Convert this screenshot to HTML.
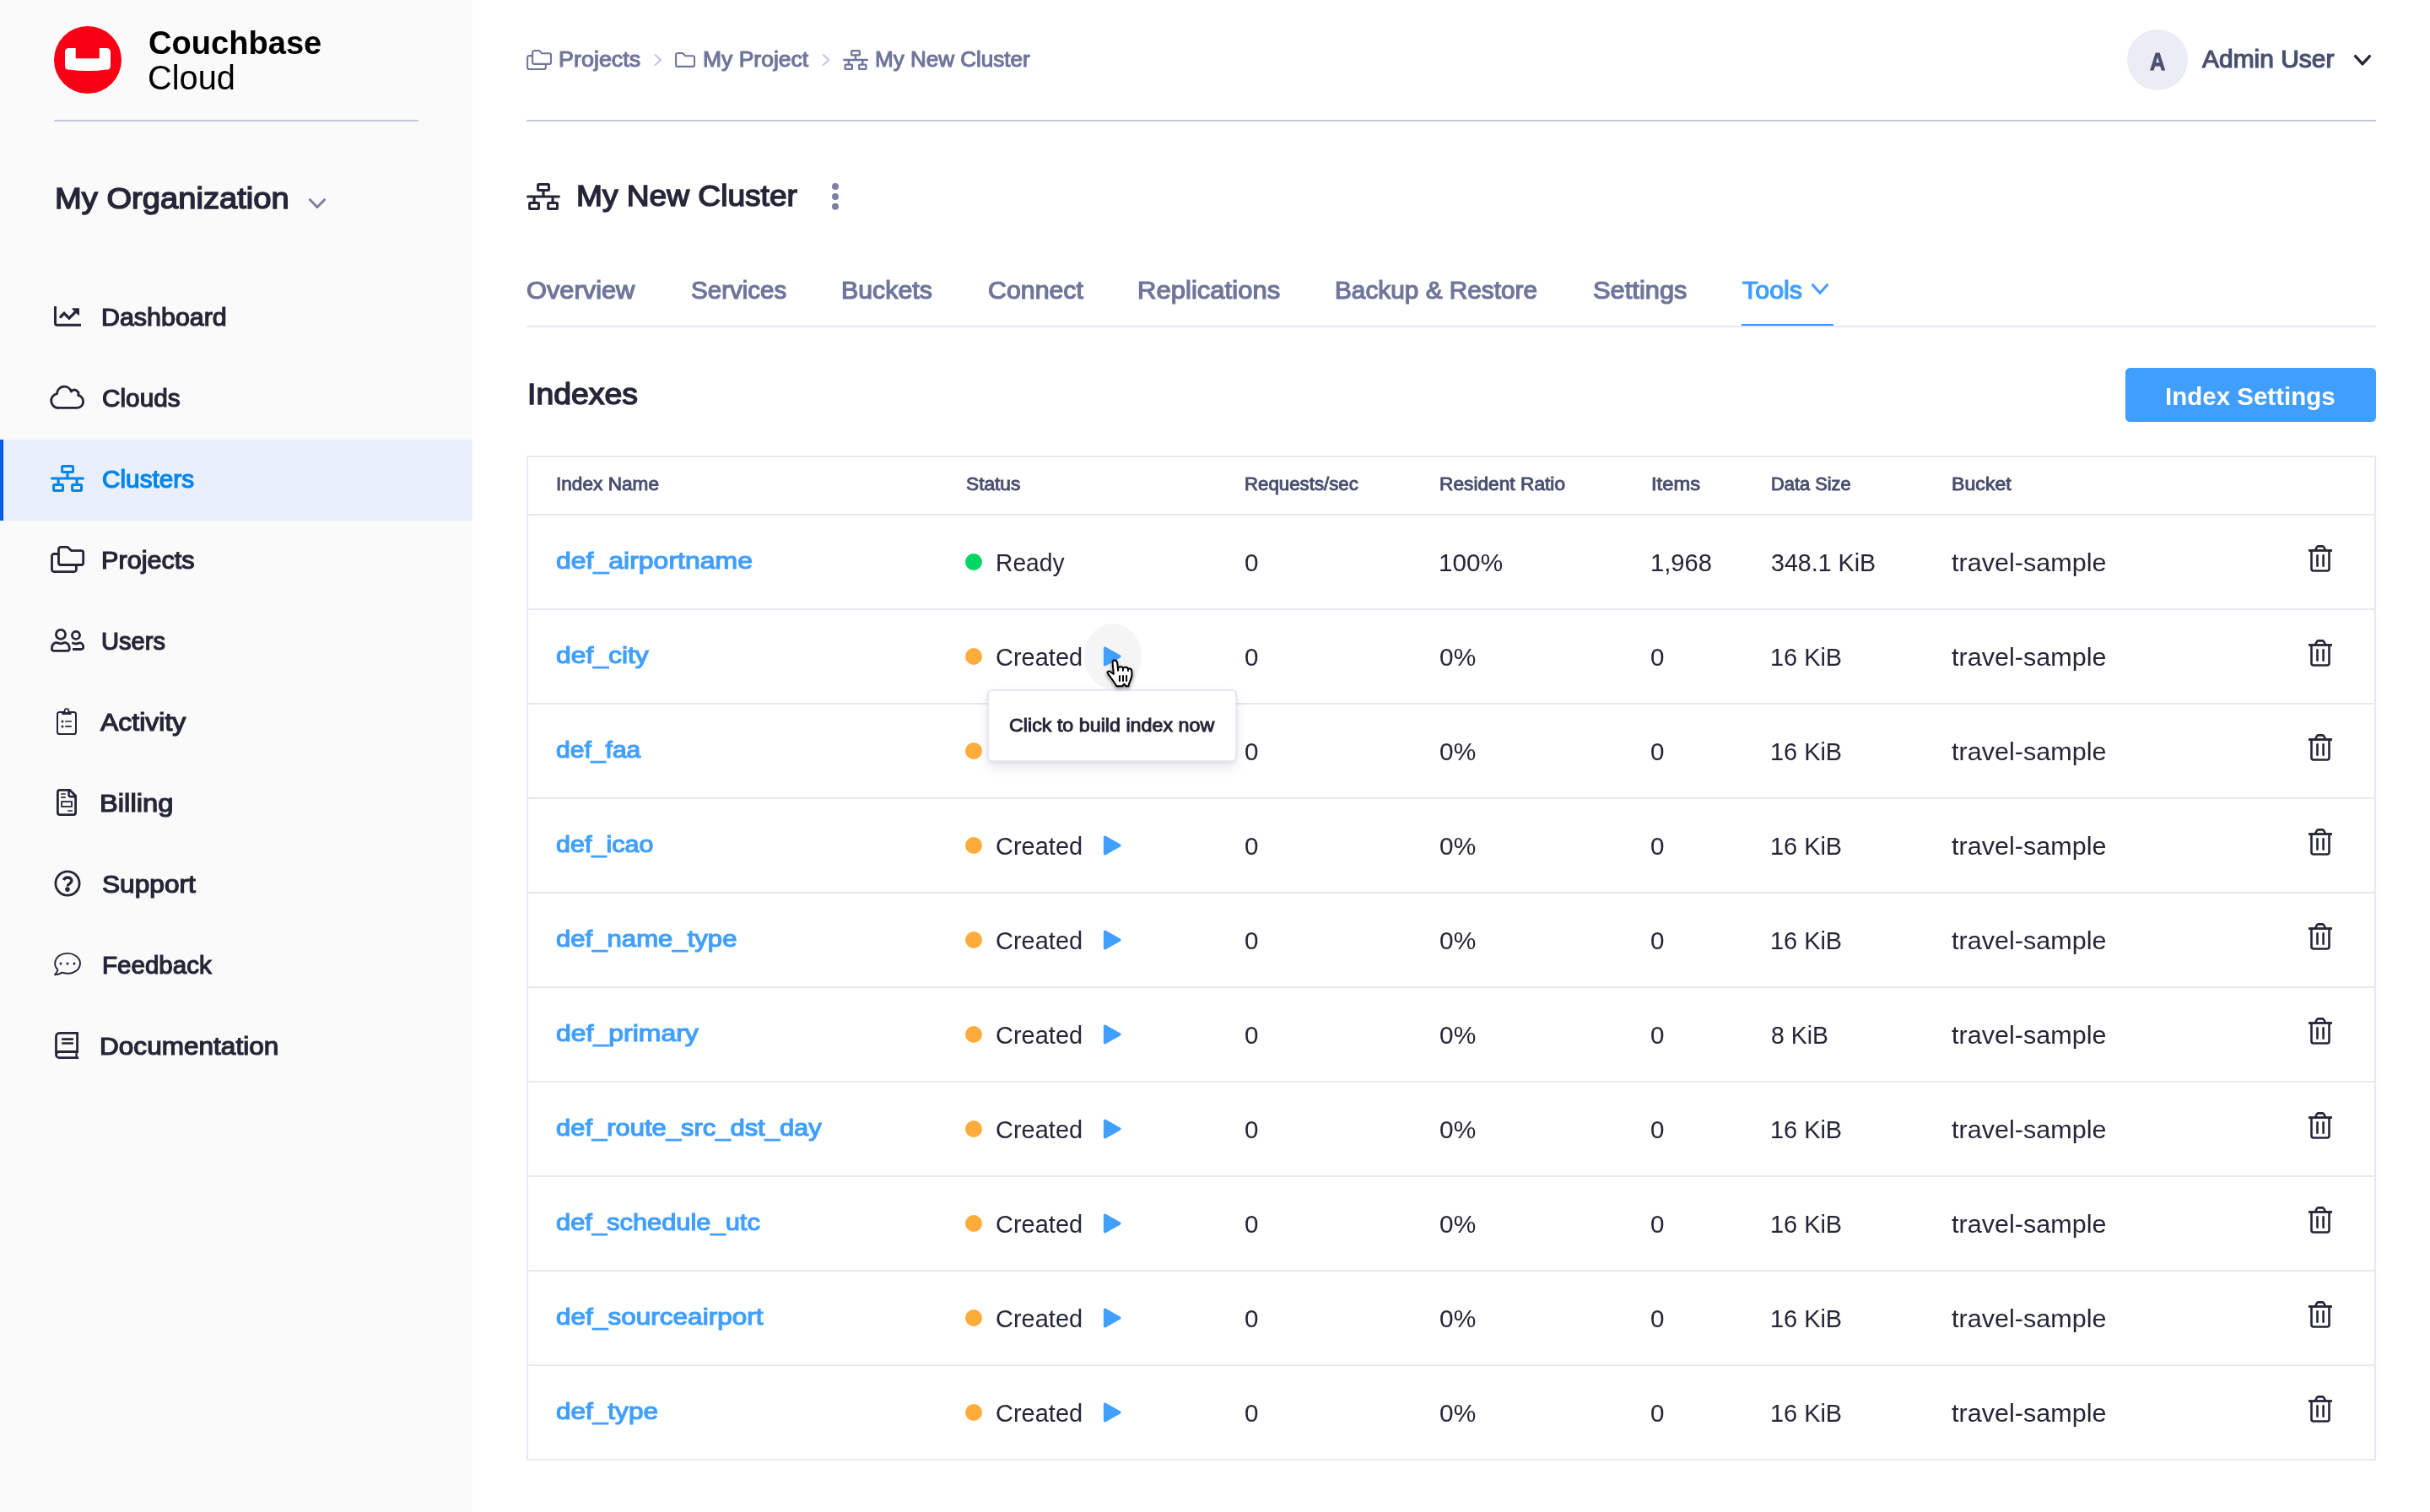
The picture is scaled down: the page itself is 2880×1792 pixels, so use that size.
<!DOCTYPE html>
<html lang="en">
<head>
<meta charset="utf-8">
<title>Couchbase Cloud - My New Cluster - Indexes</title>
<style>
*{box-sizing:border-box}
html,body{margin:0;padding:0}
html{overflow:hidden}
body{width:2880px;height:1792px;overflow:hidden;background:#fff;position:relative;
 font-family:"Liberation Sans",sans-serif;color:#252738}
.t{position:absolute;white-space:nowrap;line-height:1;transform-origin:0 0;display:block}
.b{position:absolute;display:block}
svg{position:absolute;overflow:visible}
#side{left:0;top:0;width:560px;height:1792px;background:#fafafa}
#active{left:0;top:521px;width:560px;height:96px;background:linear-gradient(90deg,#0069e8 0,#004be5 4px,#e9effc 4px)}
.hl{height:2px;background:#c3c7e1}
.rl{left:626px;width:2188px;height:2px;background:#e7e8f2}
#tbl{left:624px;top:540px;width:2192px;height:1191px;border:2px solid #e7e8f2}
#btn{left:2519.2px;top:435.8px;width:296.7px;height:64.2px;background:#409eff;border-radius:5.5px}
#ava{left:2520.8px;top:34.9px;width:72.2px;height:72.2px;border-radius:50%;background:#ebecf4}
#hov{left:1285px;top:739px;width:68px;height:78px;border-radius:50%;background:#f5f5f5}
#tip{left:1169.6px;top:816.8px;width:296.9px;height:86px;background:#fff;border:2px solid #e7e8f2;border-radius:6px;
 box-shadow:0 1px 3px rgba(40,44,90,.10),0 7px 14px rgba(40,44,90,.10)}
.dot{width:20px;height:20px;border-radius:50%;left:1144px}
</style>
</head>
<body>
<div class="b" id="side"></div>
<div class="b" id="active"></div>
<div class="b hl" style="left:64px;top:142px;width:432px"></div>
<div class="b hl" style="left:624px;top:142px;width:2192px"></div>
<div class="b" style="left:624px;top:386px;width:2192px;height:2px;background:#e7e8f2"></div>
<div class="b" style="left:2064px;top:384px;width:109px;height:2px;background:#3398ff"></div>
<div class="b" id="btn"></div>
<div class="b" id="ava"></div>
<div class="b" id="tbl"></div>
<div class="b rl" style="top:609px"></div>
<div class="b dot" style="top:656px;background:#00d664"></div>
<div class="b rl" style="top:721px"></div>
<div class="b dot" style="top:768px;background:#ffac3a"></div>
<div class="b rl" style="top:833px"></div>
<div class="b dot" style="top:880px;background:#ffac3a"></div>
<div class="b rl" style="top:945px"></div>
<div class="b dot" style="top:992px;background:#ffac3a"></div>
<div class="b rl" style="top:1057px"></div>
<div class="b dot" style="top:1104px;background:#ffac3a"></div>
<div class="b rl" style="top:1169px"></div>
<div class="b dot" style="top:1216px;background:#ffac3a"></div>
<div class="b rl" style="top:1281px"></div>
<div class="b dot" style="top:1328px;background:#ffac3a"></div>
<div class="b rl" style="top:1393px"></div>
<div class="b dot" style="top:1440px;background:#ffac3a"></div>
<div class="b rl" style="top:1505px"></div>
<div class="b dot" style="top:1552px;background:#ffac3a"></div>
<div class="b rl" style="top:1617px"></div>
<div class="b dot" style="top:1664px;background:#ffac3a"></div>
<div class="b" id="hov"></div>
<svg width="2880" height="1792" viewBox="0 0 2880 1792" style="left:0;top:0"><circle cx="104" cy="71" r="40" fill="#fa0014"/>
<path d="M81 57H89.7V69.2H117.8V57H126.5A4.5 4.5 0 0 1 131 61.5V78.2A4.5 4.5 0 0 1 126.8 82.6Q104 85.6 81.2 82.6A4.5 4.5 0 0 1 77 78.2V61.5A4.5 4.5 0 0 1 81 57Z" fill="#fff"/>
<path d="M367.4 236.7L376 245.5L384.6 236.7" fill="none" stroke="#7e809e" stroke-width="3" stroke-linecap="round" stroke-linejoin="round"/>
<g transform="translate(0 0)" fill="none" stroke="#252738" color="#252738" stroke-linecap="round" stroke-linejoin="round"><path d="M65.5 363.1V383.5A1.8 1.8 0 0 0 67.3 385.3H96" stroke-width="3" stroke-linecap="butt"/><path d="M71.9 375.5L76 371.3L82 377.2L89.5 369.7" stroke-width="3.3" stroke-linecap="round" stroke-linejoin="miter"/><path d="M86.1 365.9H93.3V373.1Z" fill="currentColor" stroke-width="1.4"/></g>
<g transform="translate(0 0)" fill="none" stroke="#252738" color="#252738" stroke-linecap="round" stroke-linejoin="round"><path d="M69.9 483.4A8.5 8.5 0 0 1 67.5 466.6A8.7 8.7 0 0 1 84.4 464A4.8 4.8 0 0 1 92.7 468.5A7.55 7.55 0 0 1 91.6 483.4Z" stroke-width="2.9"/></g>
<g transform="translate(60 551)" fill="none" stroke="#0086eb" color="#0086eb" stroke-linecap="round" stroke-linejoin="round"><rect x="13.6" y="1.5" width="12.9" height="7" rx="1" stroke-width="3"/><rect x="3.6" y="23.5" width="10.9" height="7" rx="1" stroke-width="3"/><rect x="25.6" y="23.5" width="10.9" height="7" rx="1" stroke-width="3"/><path d="M20 10V16M1.6 16H38.4M9.1 16V22M31.1 16V22" stroke-width="3.2"/></g>
<g transform="translate(60 647)" fill="none" stroke="#252738" color="#252738" stroke-linecap="round" stroke-linejoin="round"><path d="M12 1.4H20.2L24.4 5.6H36.2A2.5 2.5 0 0 1 38.7 8.1V20A2.5 2.5 0 0 1 36.2 22.5H12A2.5 2.5 0 0 1 9.5 20V3.9A2.5 2.5 0 0 1 12 1.4Z" stroke-width="2.8"/><path d="M8 9.5H4A2.5 2.5 0 0 0 1.5 12V28.1A2.5 2.5 0 0 0 4 30.6H27.9A2.5 2.5 0 0 0 30.4 28.1V24" stroke-width="2.8" stroke-linecap="butt"/></g>
<g transform="translate(0 0)" fill="none" stroke="#252738" color="#252738" stroke-linecap="round" stroke-linejoin="round"><circle cx="72" cy="751.9" r="5.55" stroke-width="2.8"/><path d="M63.9 771.4H79.8A2.5 2.5 0 0 0 82.3 768.9V768.2C82.3 764.4 79.7 761.7 76.8 761.7C75.2 761.7 74.4 762.8 71.9 762.8C69.3 762.8 68.5 761.7 66.9 761.7C64 761.7 61.4 764.4 61.4 768.2V768.9A2.5 2.5 0 0 0 63.9 771.4Z" stroke-width="2.8"/><circle cx="90" cy="752.9" r="4.55" stroke-width="2.8"/><path d="M85.3 761.7C86.7 762.3 87.7 763 90 763C92.4 763 93.2 761.9 94.6 761.9C97 761.9 98.7 764.3 98.7 767V767.2A2.3 2.3 0 0 1 96.4 769.5H86.1" stroke-width="2.8" stroke-linecap="butt"/></g>
<g transform="translate(0 0)" fill="none" stroke="#252738" color="#252738" stroke-linecap="round" stroke-linejoin="round"><rect x="68" y="843.9" width="22" height="26.1" rx="2.6" stroke-width="2"/><path d="M73.2 844.2H84.7V846.2A0.7 0.7 0 0 1 84 846.9H73.9A0.7 0.7 0 0 1 73.2 846.2Z" fill="currentColor" stroke="none"/><circle cx="78.95" cy="842.5" r="2.5" fill="#fafafa" stroke-width="1.7"/><circle cx="74" cy="855" r="1.5" fill="currentColor" stroke="none"/><circle cx="74" cy="860.95" r="1.5" fill="currentColor" stroke="none"/><path d="M77.2 855H84.8M77.2 860.95H84.8" stroke-width="1.7" stroke-linecap="butt"/></g>
<g transform="translate(0 0)" fill="none" stroke="#252738" color="#252738" stroke-linecap="round" stroke-linejoin="round"><path d="M71 936.3H82.6L89.6 943.3V963A2.6 2.6 0 0 1 87 965.6H71A2.6 2.6 0 0 1 68.4 963V938.9A2.6 2.6 0 0 1 71 936.3Z" stroke-width="2.8"/><path d="M81.6 936.5V942.5A1.6 1.6 0 0 0 83.2 944.1H89.4" stroke-width="2.6"/><path d="M72.2 940.95H77.8M72.2 945.1H77.8M80.1 961.05H85.9" stroke-width="1.6" stroke-linecap="butt"/><rect x="73.1" y="950.1" width="11.9" height="5.8" stroke-width="1.8" stroke-linejoin="miter"/></g>
<g transform="translate(0 0)" fill="none" stroke="#252738" color="#252738" stroke-linecap="round" stroke-linejoin="round"><circle cx="80" cy="1047.05" r="14.1" stroke-width="2.8"/><path d="M75.4 1043C76.2 1041.1 77.8 1040 80.1 1040C82.9 1040 84.9 1041.6 84.9 1044C84.9 1047.2 80 1047.4 80 1050.6" stroke-width="3.4" stroke-linecap="butt"/><circle cx="80" cy="1054.1" r="2.8" fill="currentColor" stroke="none"/></g>
<g transform="translate(0 0)" fill="none" stroke="#252738" color="#252738" stroke-linecap="round" stroke-linejoin="round"><path d="M73.8 1152.6A14.9 11.9 0 1 0 68.4 1149.2Q67.6 1152.4 65 1155.4Q70 1155 73.8 1152.6Z" stroke-width="1.9"/><circle cx="72" cy="1141.9" r="1.5" fill="currentColor" stroke="none"/><circle cx="79.95" cy="1141.9" r="1.5" fill="currentColor" stroke="none"/><circle cx="88" cy="1141.9" r="1.5" fill="currentColor" stroke="none"/></g>
<g transform="translate(0 0)" fill="none" stroke="#252738" color="#252738" stroke-linecap="round" stroke-linejoin="round"><path d="M93 1253.6H70.1A3.6 3.6 0 0 1 66.5 1250V1228.3A4 4 0 0 1 70.5 1224.3H91.6V1246.5H70.1A3.55 3.55 0 0 0 66.5 1250" stroke-width="2.8" stroke-linecap="butt" stroke-linejoin="miter"/><path d="M90.6 1246.5V1253.6" stroke-width="2.3" stroke-linecap="butt"/><path d="M73.2 1231.55H86.9M73.2 1236.5H86.9" stroke-width="2.7" stroke-linecap="butt"/></g>
<g transform="translate(624 59) scale(0.75)" fill="none" stroke="#70769a" color="#70769a" stroke-linecap="round" stroke-linejoin="round"><path d="M12 1.4H20.2L24.4 5.6H36.2A2.5 2.5 0 0 1 38.7 8.1V20A2.5 2.5 0 0 1 36.2 22.5H12A2.5 2.5 0 0 1 9.5 20V3.9A2.5 2.5 0 0 1 12 1.4Z" stroke-width="2.8"/><path d="M8 9.5H4A2.5 2.5 0 0 0 1.5 12V28.1A2.5 2.5 0 0 0 4 30.6H27.9A2.5 2.5 0 0 0 30.4 28.1V24" stroke-width="2.8" stroke-linecap="butt"/></g>
<path d="M776.5 64.9L783.0999999999999 71L776.5 77.1" fill="none" stroke="#c0c4e4" stroke-width="2" stroke-linecap="round" stroke-linejoin="round"/>
<g transform="translate(800 62) scale(0.75)" fill="none" stroke="#70769a" color="#70769a" stroke-linecap="round" stroke-linejoin="round"><path transform="translate(-8 0)" d="M12 1.4H20.2L24.4 5.6H36.2A2.5 2.5 0 0 1 38.7 8.1V20A2.5 2.5 0 0 1 36.2 22.5H12A2.5 2.5 0 0 1 9.5 20V3.9A2.5 2.5 0 0 1 12 1.4Z" stroke-width="2.8"/></g>
<path d="M975.7 64.9L982.3 71L975.7 77.1" fill="none" stroke="#c0c4e4" stroke-width="2" stroke-linecap="round" stroke-linejoin="round"/>
<g transform="translate(999 59) scale(0.75)" fill="none" stroke="#70769a" color="#70769a" stroke-linecap="round" stroke-linejoin="round"><rect x="13.6" y="1.5" width="12.9" height="7" rx="1" stroke-width="3"/><rect x="3.6" y="23.5" width="10.9" height="7" rx="1" stroke-width="3"/><rect x="25.6" y="23.5" width="10.9" height="7" rx="1" stroke-width="3"/><path d="M20 10V16M1.6 16H38.4M9.1 16V22M31.1 16V22" stroke-width="3.2"/></g>
<path d="M2791.6 66.60000000000001L2800 75.8L2808.4 66.60000000000001" fill="none" stroke="#252738" stroke-width="3.3" stroke-linecap="round" stroke-linejoin="round"/>
<g transform="translate(624 217)" fill="none" stroke="#252738" color="#252738" stroke-linecap="round" stroke-linejoin="round"><rect x="13.6" y="1.5" width="12.9" height="7" rx="1" stroke-width="3"/><rect x="3.6" y="23.5" width="10.9" height="7" rx="1" stroke-width="3"/><rect x="25.6" y="23.5" width="10.9" height="7" rx="1" stroke-width="3"/><path d="M20 10V16M1.6 16H38.4M9.1 16V22M31.1 16V22" stroke-width="3.2"/></g>
<circle cx="990" cy="221.1" r="4" fill="#7d80a0"/>
<circle cx="990" cy="232.9" r="4" fill="#7d80a0"/>
<circle cx="990" cy="244.8" r="4" fill="#7d80a0"/>
<path d="M2148.5 337.75L2157 347.25L2165.5 337.75" fill="none" stroke="#409fff" stroke-width="3.2" stroke-linecap="round" stroke-linejoin="round"/>
<g transform="translate(2736 646)" fill="none" stroke="#252738" color="#252738" stroke-linecap="round" stroke-linejoin="round"><path d="M1.4 6.5H26.6" stroke-width="2.8" stroke-linecap="square"/><path d="M3.5 6.5V28A2.5 2.5 0 0 0 6 30.5H22A2.5 2.5 0 0 0 24.5 28V6.5" stroke-width="2.6"/><path d="M8 6L10 2.3Q10.5 1.4 11.5 1.4H16.6Q17.6 1.4 18.1 2.3L20.1 6" stroke-width="2.6"/><path d="M10.5 12.3V24.7M17.6 12.3V24.7" stroke-width="2.6"/></g>
<g transform="translate(2736 758)" fill="none" stroke="#252738" color="#252738" stroke-linecap="round" stroke-linejoin="round"><path d="M1.4 6.5H26.6" stroke-width="2.8" stroke-linecap="square"/><path d="M3.5 6.5V28A2.5 2.5 0 0 0 6 30.5H22A2.5 2.5 0 0 0 24.5 28V6.5" stroke-width="2.6"/><path d="M8 6L10 2.3Q10.5 1.4 11.5 1.4H16.6Q17.6 1.4 18.1 2.3L20.1 6" stroke-width="2.6"/><path d="M10.5 12.3V24.7M17.6 12.3V24.7" stroke-width="2.6"/></g>
<g transform="translate(1307.8 766)" fill="none" stroke="#409fff" color="#409fff" stroke-linecap="round" stroke-linejoin="round"><path d="M1.8 2.3L19.1 12L1.8 21.7Z" fill="currentColor" stroke-width="3.4"/></g>
<g transform="translate(2736 870)" fill="none" stroke="#252738" color="#252738" stroke-linecap="round" stroke-linejoin="round"><path d="M1.4 6.5H26.6" stroke-width="2.8" stroke-linecap="square"/><path d="M3.5 6.5V28A2.5 2.5 0 0 0 6 30.5H22A2.5 2.5 0 0 0 24.5 28V6.5" stroke-width="2.6"/><path d="M8 6L10 2.3Q10.5 1.4 11.5 1.4H16.6Q17.6 1.4 18.1 2.3L20.1 6" stroke-width="2.6"/><path d="M10.5 12.3V24.7M17.6 12.3V24.7" stroke-width="2.6"/></g>
<g transform="translate(1307.8 878)" fill="none" stroke="#409fff" color="#409fff" stroke-linecap="round" stroke-linejoin="round"><path d="M1.8 2.3L19.1 12L1.8 21.7Z" fill="currentColor" stroke-width="3.4"/></g>
<g transform="translate(2736 982)" fill="none" stroke="#252738" color="#252738" stroke-linecap="round" stroke-linejoin="round"><path d="M1.4 6.5H26.6" stroke-width="2.8" stroke-linecap="square"/><path d="M3.5 6.5V28A2.5 2.5 0 0 0 6 30.5H22A2.5 2.5 0 0 0 24.5 28V6.5" stroke-width="2.6"/><path d="M8 6L10 2.3Q10.5 1.4 11.5 1.4H16.6Q17.6 1.4 18.1 2.3L20.1 6" stroke-width="2.6"/><path d="M10.5 12.3V24.7M17.6 12.3V24.7" stroke-width="2.6"/></g>
<g transform="translate(1307.8 990)" fill="none" stroke="#409fff" color="#409fff" stroke-linecap="round" stroke-linejoin="round"><path d="M1.8 2.3L19.1 12L1.8 21.7Z" fill="currentColor" stroke-width="3.4"/></g>
<g transform="translate(2736 1094)" fill="none" stroke="#252738" color="#252738" stroke-linecap="round" stroke-linejoin="round"><path d="M1.4 6.5H26.6" stroke-width="2.8" stroke-linecap="square"/><path d="M3.5 6.5V28A2.5 2.5 0 0 0 6 30.5H22A2.5 2.5 0 0 0 24.5 28V6.5" stroke-width="2.6"/><path d="M8 6L10 2.3Q10.5 1.4 11.5 1.4H16.6Q17.6 1.4 18.1 2.3L20.1 6" stroke-width="2.6"/><path d="M10.5 12.3V24.7M17.6 12.3V24.7" stroke-width="2.6"/></g>
<g transform="translate(1307.8 1102)" fill="none" stroke="#409fff" color="#409fff" stroke-linecap="round" stroke-linejoin="round"><path d="M1.8 2.3L19.1 12L1.8 21.7Z" fill="currentColor" stroke-width="3.4"/></g>
<g transform="translate(2736 1206)" fill="none" stroke="#252738" color="#252738" stroke-linecap="round" stroke-linejoin="round"><path d="M1.4 6.5H26.6" stroke-width="2.8" stroke-linecap="square"/><path d="M3.5 6.5V28A2.5 2.5 0 0 0 6 30.5H22A2.5 2.5 0 0 0 24.5 28V6.5" stroke-width="2.6"/><path d="M8 6L10 2.3Q10.5 1.4 11.5 1.4H16.6Q17.6 1.4 18.1 2.3L20.1 6" stroke-width="2.6"/><path d="M10.5 12.3V24.7M17.6 12.3V24.7" stroke-width="2.6"/></g>
<g transform="translate(1307.8 1214)" fill="none" stroke="#409fff" color="#409fff" stroke-linecap="round" stroke-linejoin="round"><path d="M1.8 2.3L19.1 12L1.8 21.7Z" fill="currentColor" stroke-width="3.4"/></g>
<g transform="translate(2736 1318)" fill="none" stroke="#252738" color="#252738" stroke-linecap="round" stroke-linejoin="round"><path d="M1.4 6.5H26.6" stroke-width="2.8" stroke-linecap="square"/><path d="M3.5 6.5V28A2.5 2.5 0 0 0 6 30.5H22A2.5 2.5 0 0 0 24.5 28V6.5" stroke-width="2.6"/><path d="M8 6L10 2.3Q10.5 1.4 11.5 1.4H16.6Q17.6 1.4 18.1 2.3L20.1 6" stroke-width="2.6"/><path d="M10.5 12.3V24.7M17.6 12.3V24.7" stroke-width="2.6"/></g>
<g transform="translate(1307.8 1326)" fill="none" stroke="#409fff" color="#409fff" stroke-linecap="round" stroke-linejoin="round"><path d="M1.8 2.3L19.1 12L1.8 21.7Z" fill="currentColor" stroke-width="3.4"/></g>
<g transform="translate(2736 1430)" fill="none" stroke="#252738" color="#252738" stroke-linecap="round" stroke-linejoin="round"><path d="M1.4 6.5H26.6" stroke-width="2.8" stroke-linecap="square"/><path d="M3.5 6.5V28A2.5 2.5 0 0 0 6 30.5H22A2.5 2.5 0 0 0 24.5 28V6.5" stroke-width="2.6"/><path d="M8 6L10 2.3Q10.5 1.4 11.5 1.4H16.6Q17.6 1.4 18.1 2.3L20.1 6" stroke-width="2.6"/><path d="M10.5 12.3V24.7M17.6 12.3V24.7" stroke-width="2.6"/></g>
<g transform="translate(1307.8 1438)" fill="none" stroke="#409fff" color="#409fff" stroke-linecap="round" stroke-linejoin="round"><path d="M1.8 2.3L19.1 12L1.8 21.7Z" fill="currentColor" stroke-width="3.4"/></g>
<g transform="translate(2736 1542)" fill="none" stroke="#252738" color="#252738" stroke-linecap="round" stroke-linejoin="round"><path d="M1.4 6.5H26.6" stroke-width="2.8" stroke-linecap="square"/><path d="M3.5 6.5V28A2.5 2.5 0 0 0 6 30.5H22A2.5 2.5 0 0 0 24.5 28V6.5" stroke-width="2.6"/><path d="M8 6L10 2.3Q10.5 1.4 11.5 1.4H16.6Q17.6 1.4 18.1 2.3L20.1 6" stroke-width="2.6"/><path d="M10.5 12.3V24.7M17.6 12.3V24.7" stroke-width="2.6"/></g>
<g transform="translate(1307.8 1550)" fill="none" stroke="#409fff" color="#409fff" stroke-linecap="round" stroke-linejoin="round"><path d="M1.8 2.3L19.1 12L1.8 21.7Z" fill="currentColor" stroke-width="3.4"/></g>
<g transform="translate(2736 1654)" fill="none" stroke="#252738" color="#252738" stroke-linecap="round" stroke-linejoin="round"><path d="M1.4 6.5H26.6" stroke-width="2.8" stroke-linecap="square"/><path d="M3.5 6.5V28A2.5 2.5 0 0 0 6 30.5H22A2.5 2.5 0 0 0 24.5 28V6.5" stroke-width="2.6"/><path d="M8 6L10 2.3Q10.5 1.4 11.5 1.4H16.6Q17.6 1.4 18.1 2.3L20.1 6" stroke-width="2.6"/><path d="M10.5 12.3V24.7M17.6 12.3V24.7" stroke-width="2.6"/></g>
<g transform="translate(1307.8 1662)" fill="none" stroke="#409fff" color="#409fff" stroke-linecap="round" stroke-linejoin="round"><path d="M1.8 2.3L19.1 12L1.8 21.7Z" fill="currentColor" stroke-width="3.4"/></g></svg>
<span class="t" style="left:175.6px;top:31.1px;font-size:39.38px;color:#000;transform:scaleX(0.9670);font-weight:700">Couchbase</span>
<span class="t" style="left:174.6px;top:73.1px;font-size:40.26px;color:#000;transform:scaleX(0.9883)">Cloud</span>
<span class="t" style="left:65.3px;top:217.9px;font-size:35.8px;color:#252738;transform:scaleX(1.0654);-webkit-text-stroke:1.5px">My Organization</span>
<span class="t" style="left:120.0px;top:361.9px;font-size:28.64px;color:#252738;transform:scaleX(1.0621);-webkit-text-stroke:1.2px">Dashboard</span>
<span class="t" style="left:121.1px;top:457.9px;font-size:28.64px;color:#252738;transform:scaleX(1.0394);-webkit-text-stroke:1.2px">Clouds</span>
<span class="t" style="left:121.1px;top:553.9px;font-size:28.64px;color:#0086eb;transform:scaleX(1.0394);-webkit-text-stroke:1.2px">Clusters</span>
<span class="t" style="left:120.0px;top:649.9px;font-size:28.64px;color:#252738;transform:scaleX(1.0705);-webkit-text-stroke:1.2px">Projects</span>
<span class="t" style="left:120.0px;top:745.9px;font-size:28.64px;color:#252738;transform:scaleX(1.0158);-webkit-text-stroke:1.2px">Users</span>
<span class="t" style="left:118.7px;top:841.9px;font-size:28.64px;color:#252738;transform:scaleX(1.1173);-webkit-text-stroke:1.2px">Activity</span>
<span class="t" style="left:118.2px;top:937.9px;font-size:28.64px;color:#252738;transform:scaleX(1.1440);-webkit-text-stroke:1.2px">Billing</span>
<span class="t" style="left:120.5px;top:1033.9px;font-size:28.64px;color:#252738;transform:scaleX(1.1054);-webkit-text-stroke:1.2px">Support</span>
<span class="t" style="left:120.6px;top:1129.9px;font-size:28.64px;color:#252738;transform:scaleX(1.0319);-webkit-text-stroke:1.2px">Feedback</span>
<span class="t" style="left:118.3px;top:1225.9px;font-size:28.64px;color:#252738;transform:scaleX(1.1026);-webkit-text-stroke:1.2px">Documentation</span>
<span class="t" style="left:662.3px;top:58.2px;font-size:25.06px;color:#70769a;transform:scaleX(1.0752);-webkit-text-stroke:1.05px">Projects</span>
<span class="t" style="left:832.7px;top:58.2px;font-size:25.06px;color:#70769a;transform:scaleX(1.0580);-webkit-text-stroke:1.05px">My Project</span>
<span class="t" style="left:1037.0px;top:58.2px;font-size:25.06px;color:#70769a;transform:scaleX(1.0396);-webkit-text-stroke:1.05px">My New Cluster</span>
<span class="t" style="left:2548.2px;top:57.5px;font-size:29.76px;color:#4a5070;transform:scaleX(0.8539);font-weight:700;-webkit-text-stroke:0.9px">A</span>
<span class="t" style="left:2609.9px;top:56.1px;font-size:28.64px;color:#4a5070;transform:scaleX(1.0463);-webkit-text-stroke:1.2px">Admin User</span>
<span class="t" style="left:683.4px;top:215.1px;font-size:35.8px;color:#252738;transform:scaleX(1.0369);-webkit-text-stroke:1.5px">My New Cluster</span>
<span class="t" style="left:624.4px;top:329.7px;font-size:28.64px;color:#70769a;transform:scaleX(1.0758);-webkit-text-stroke:1.2px">Overview</span>
<span class="t" style="left:819.4px;top:329.7px;font-size:28.64px;color:#70769a;transform:scaleX(1.0324);-webkit-text-stroke:1.2px">Services</span>
<span class="t" style="left:997.2px;top:329.7px;font-size:28.64px;color:#70769a;transform:scaleX(1.0595);-webkit-text-stroke:1.2px">Buckets</span>
<span class="t" style="left:1170.5px;top:329.7px;font-size:28.64px;color:#70769a;transform:scaleX(1.0593);-webkit-text-stroke:1.2px">Connect</span>
<span class="t" style="left:1348.1px;top:329.7px;font-size:28.64px;color:#70769a;transform:scaleX(1.0852);-webkit-text-stroke:1.2px">Replications</span>
<span class="t" style="left:1582.2px;top:329.7px;font-size:28.64px;color:#70769a;transform:scaleX(1.0407);-webkit-text-stroke:1.2px">Backup &amp; Restore</span>
<span class="t" style="left:1887.6px;top:329.7px;font-size:28.64px;color:#70769a;transform:scaleX(1.0782);-webkit-text-stroke:1.2px">Settings</span>
<span class="t" style="left:2064.6px;top:329.7px;font-size:28.64px;color:#409fff;transform:scaleX(1.0634);-webkit-text-stroke:1.2px">Tools</span>
<span class="t" style="left:624.5px;top:449.8px;font-size:35.8px;color:#252738;transform:scaleX(1.0449);-webkit-text-stroke:1.5px">Indexes</span>
<span class="t" style="left:2566.3px;top:454.7px;font-size:30.08px;color:#fff;transform:scaleX(0.9806);font-weight:700">Index Settings</span>
<span class="t" style="left:658.7px;top:564.4px;font-size:21.48px;color:#4a4f6e;transform:scaleX(1.0540);-webkit-text-stroke:0.9px">Index Name</span>
<span class="t" style="left:1144.5px;top:564.4px;font-size:21.48px;color:#4a4f6e;transform:scaleX(1.0569);-webkit-text-stroke:0.9px">Status</span>
<span class="t" style="left:1475.4px;top:564.4px;font-size:21.48px;color:#4a4f6e;transform:scaleX(1.0366);-webkit-text-stroke:0.9px">Requests/sec</span>
<span class="t" style="left:1706.4px;top:564.4px;font-size:21.48px;color:#4a4f6e;transform:scaleX(1.0584);-webkit-text-stroke:0.9px">Resident Ratio</span>
<span class="t" style="left:1956.8px;top:564.4px;font-size:21.48px;color:#4a4f6e;transform:scaleX(1.1055);-webkit-text-stroke:0.9px">Items</span>
<span class="t" style="left:2099.4px;top:564.4px;font-size:21.48px;color:#4a4f6e;transform:scaleX(1.0159);-webkit-text-stroke:0.9px">Data Size</span>
<span class="t" style="left:2312.7px;top:564.4px;font-size:21.48px;color:#4a4f6e;transform:scaleX(1.0783);-webkit-text-stroke:0.9px">Bucket</span>
<span class="t" style="left:658.5px;top:651.3px;font-size:28.0px;color:#409fff;transform:scaleX(1.1424);-webkit-text-stroke:1.18px">def_airportname</span>
<span class="t" style="left:1179.7px;top:651.9px;font-size:30.08px;color:#252738;transform:scaleX(0.9387)">Ready</span>
<span class="t" style="left:1475.2px;top:651.9px;font-size:30.08px;color:#252738;transform:scaleX(0.9867)">0</span>
<span class="t" style="left:1705.0px;top:651.9px;font-size:30.08px;color:#252738;transform:scaleX(0.9894)">100%</span>
<span class="t" style="left:1955.5px;top:651.9px;font-size:30.08px;color:#252738;transform:scaleX(0.9705)">1,968</span>
<span class="t" style="left:2099.0px;top:651.9px;font-size:30.08px;color:#252738;transform:scaleX(0.9519)">348.1 KiB</span>
<span class="t" style="left:2313.3px;top:651.9px;font-size:30.08px;color:#252738;transform:scaleX(1.0161)">travel-sample</span>
<span class="t" style="left:658.5px;top:763.3px;font-size:28.0px;color:#409fff;transform:scaleX(1.1378);-webkit-text-stroke:1.18px">def_city</span>
<span class="t" style="left:1180.4px;top:763.9px;font-size:30.08px;color:#252738;transform:scaleX(0.9638)">Created</span>
<span class="t" style="left:1475.2px;top:763.9px;font-size:30.08px;color:#252738;transform:scaleX(0.9867)">0</span>
<span class="t" style="left:1706.0px;top:763.9px;font-size:30.08px;color:#252738;transform:scaleX(0.9945)">0%</span>
<span class="t" style="left:1956.4px;top:763.9px;font-size:30.08px;color:#252738;transform:scaleX(0.9867)">0</span>
<span class="t" style="left:2098.1px;top:763.9px;font-size:30.08px;color:#252738;transform:scaleX(0.9608)">16 KiB</span>
<span class="t" style="left:2313.3px;top:763.9px;font-size:30.08px;color:#252738;transform:scaleX(1.0161)">travel-sample</span>
<span class="t" style="left:658.6px;top:875.3px;font-size:28.0px;color:#409fff;transform:scaleX(1.0742);-webkit-text-stroke:1.18px">def_faa</span>
<span class="t" style="left:1180.4px;top:875.9px;font-size:30.08px;color:#252738;transform:scaleX(0.9638)">Created</span>
<span class="t" style="left:1475.2px;top:875.9px;font-size:30.08px;color:#252738;transform:scaleX(0.9867)">0</span>
<span class="t" style="left:1706.0px;top:875.9px;font-size:30.08px;color:#252738;transform:scaleX(0.9945)">0%</span>
<span class="t" style="left:1956.4px;top:875.9px;font-size:30.08px;color:#252738;transform:scaleX(0.9867)">0</span>
<span class="t" style="left:2098.1px;top:875.9px;font-size:30.08px;color:#252738;transform:scaleX(0.9608)">16 KiB</span>
<span class="t" style="left:2313.3px;top:875.9px;font-size:30.08px;color:#252738;transform:scaleX(1.0161)">travel-sample</span>
<span class="t" style="left:658.6px;top:987.3px;font-size:28.0px;color:#409fff;transform:scaleX(1.0904);-webkit-text-stroke:1.18px">def_icao</span>
<span class="t" style="left:1180.4px;top:987.9px;font-size:30.08px;color:#252738;transform:scaleX(0.9638)">Created</span>
<span class="t" style="left:1475.2px;top:987.9px;font-size:30.08px;color:#252738;transform:scaleX(0.9867)">0</span>
<span class="t" style="left:1706.0px;top:987.9px;font-size:30.08px;color:#252738;transform:scaleX(0.9945)">0%</span>
<span class="t" style="left:1956.4px;top:987.9px;font-size:30.08px;color:#252738;transform:scaleX(0.9867)">0</span>
<span class="t" style="left:2098.1px;top:987.9px;font-size:30.08px;color:#252738;transform:scaleX(0.9608)">16 KiB</span>
<span class="t" style="left:2313.3px;top:987.9px;font-size:30.08px;color:#252738;transform:scaleX(1.0161)">travel-sample</span>
<span class="t" style="left:658.5px;top:1099.3px;font-size:28.0px;color:#409fff;transform:scaleX(1.1109);-webkit-text-stroke:1.18px">def_name_type</span>
<span class="t" style="left:1180.4px;top:1099.9px;font-size:30.08px;color:#252738;transform:scaleX(0.9638)">Created</span>
<span class="t" style="left:1475.2px;top:1099.9px;font-size:30.08px;color:#252738;transform:scaleX(0.9867)">0</span>
<span class="t" style="left:1706.0px;top:1099.9px;font-size:30.08px;color:#252738;transform:scaleX(0.9945)">0%</span>
<span class="t" style="left:1956.4px;top:1099.9px;font-size:30.08px;color:#252738;transform:scaleX(0.9867)">0</span>
<span class="t" style="left:2098.1px;top:1099.9px;font-size:30.08px;color:#252738;transform:scaleX(0.9608)">16 KiB</span>
<span class="t" style="left:2313.3px;top:1099.9px;font-size:30.08px;color:#252738;transform:scaleX(1.0161)">travel-sample</span>
<span class="t" style="left:658.5px;top:1211.3px;font-size:28.0px;color:#409fff;transform:scaleX(1.1418);-webkit-text-stroke:1.18px">def_primary</span>
<span class="t" style="left:1180.4px;top:1211.9px;font-size:30.08px;color:#252738;transform:scaleX(0.9638)">Created</span>
<span class="t" style="left:1475.2px;top:1211.9px;font-size:30.08px;color:#252738;transform:scaleX(0.9867)">0</span>
<span class="t" style="left:1706.0px;top:1211.9px;font-size:30.08px;color:#252738;transform:scaleX(0.9945)">0%</span>
<span class="t" style="left:1956.4px;top:1211.9px;font-size:30.08px;color:#252738;transform:scaleX(0.9867)">0</span>
<span class="t" style="left:2099.1px;top:1211.9px;font-size:30.08px;color:#252738;transform:scaleX(0.9452)">8 KiB</span>
<span class="t" style="left:2313.3px;top:1211.9px;font-size:30.08px;color:#252738;transform:scaleX(1.0161)">travel-sample</span>
<span class="t" style="left:658.5px;top:1323.3px;font-size:28.0px;color:#409fff;transform:scaleX(1.1051);-webkit-text-stroke:1.18px">def_route_src_dst_day</span>
<span class="t" style="left:1180.4px;top:1323.9px;font-size:30.08px;color:#252738;transform:scaleX(0.9638)">Created</span>
<span class="t" style="left:1475.2px;top:1323.9px;font-size:30.08px;color:#252738;transform:scaleX(0.9867)">0</span>
<span class="t" style="left:1706.0px;top:1323.9px;font-size:30.08px;color:#252738;transform:scaleX(0.9945)">0%</span>
<span class="t" style="left:1956.4px;top:1323.9px;font-size:30.08px;color:#252738;transform:scaleX(0.9867)">0</span>
<span class="t" style="left:2098.1px;top:1323.9px;font-size:30.08px;color:#252738;transform:scaleX(0.9608)">16 KiB</span>
<span class="t" style="left:2313.3px;top:1323.9px;font-size:30.08px;color:#252738;transform:scaleX(1.0161)">travel-sample</span>
<span class="t" style="left:658.5px;top:1435.3px;font-size:28.0px;color:#409fff;transform:scaleX(1.1016);-webkit-text-stroke:1.18px">def_schedule_utc</span>
<span class="t" style="left:1180.4px;top:1435.9px;font-size:30.08px;color:#252738;transform:scaleX(0.9638)">Created</span>
<span class="t" style="left:1475.2px;top:1435.9px;font-size:30.08px;color:#252738;transform:scaleX(0.9867)">0</span>
<span class="t" style="left:1706.0px;top:1435.9px;font-size:30.08px;color:#252738;transform:scaleX(0.9945)">0%</span>
<span class="t" style="left:1956.4px;top:1435.9px;font-size:30.08px;color:#252738;transform:scaleX(0.9867)">0</span>
<span class="t" style="left:2098.1px;top:1435.9px;font-size:30.08px;color:#252738;transform:scaleX(0.9608)">16 KiB</span>
<span class="t" style="left:2313.3px;top:1435.9px;font-size:30.08px;color:#252738;transform:scaleX(1.0161)">travel-sample</span>
<span class="t" style="left:658.5px;top:1547.3px;font-size:28.0px;color:#409fff;transform:scaleX(1.1269);-webkit-text-stroke:1.18px">def_sourceairport</span>
<span class="t" style="left:1180.4px;top:1547.9px;font-size:30.08px;color:#252738;transform:scaleX(0.9638)">Created</span>
<span class="t" style="left:1475.2px;top:1547.9px;font-size:30.08px;color:#252738;transform:scaleX(0.9867)">0</span>
<span class="t" style="left:1706.0px;top:1547.9px;font-size:30.08px;color:#252738;transform:scaleX(0.9945)">0%</span>
<span class="t" style="left:1956.4px;top:1547.9px;font-size:30.08px;color:#252738;transform:scaleX(0.9867)">0</span>
<span class="t" style="left:2098.1px;top:1547.9px;font-size:30.08px;color:#252738;transform:scaleX(0.9608)">16 KiB</span>
<span class="t" style="left:2313.3px;top:1547.9px;font-size:30.08px;color:#252738;transform:scaleX(1.0161)">travel-sample</span>
<span class="t" style="left:658.5px;top:1659.3px;font-size:28.0px;color:#409fff;transform:scaleX(1.1259);-webkit-text-stroke:1.18px">def_type</span>
<span class="t" style="left:1180.4px;top:1659.9px;font-size:30.08px;color:#252738;transform:scaleX(0.9638)">Created</span>
<span class="t" style="left:1475.2px;top:1659.9px;font-size:30.08px;color:#252738;transform:scaleX(0.9867)">0</span>
<span class="t" style="left:1706.0px;top:1659.9px;font-size:30.08px;color:#252738;transform:scaleX(0.9945)">0%</span>
<span class="t" style="left:1956.4px;top:1659.9px;font-size:30.08px;color:#252738;transform:scaleX(0.9867)">0</span>
<span class="t" style="left:2098.1px;top:1659.9px;font-size:30.08px;color:#252738;transform:scaleX(0.9608)">16 KiB</span>
<span class="t" style="left:2313.3px;top:1659.9px;font-size:30.08px;color:#252738;transform:scaleX(1.0161)">travel-sample</span>
<div class="b" id="tip"></div>
<span class="t" style="left:1195.6px;top:849.2px;font-size:21.84px;color:#252738;transform:scaleX(1.0664);-webkit-text-stroke:0.92px">Click to build index now</span>
<svg width="2880" height="1792" viewBox="0 0 2880 1792" style="left:0;top:0;filter:drop-shadow(0 2px 2px rgba(0,0,0,.45))"><path d="M1320.8 782.6C1322.6 782.6 1324 784 1324.2 786L1325.2 794.8L1325.2 792.3C1325.4 789.6 1330.6 789.6 1330.9 792.5L1330.9 794.8L1330.9 792.8C1331.2 789.9 1336.6 790 1337 793L1337 795L1337 794C1337.4 791.6 1341.2 792 1341.3 795.4L1341.5 800C1341.5 804.5 1338.4 807 1337.4 813.3L1334.6 813.3L1332.3 810.6L1330 813.3L1323.4 813.3C1321 808.5 1315.6 802 1312.9 798.1C1311.8 796.3 1313.7 794.9 1315.4 795.8L1319.9 799L1318.6 786C1318.4 784 1319.3 782.6 1320.8 782.6Z" fill="#fff" stroke="#000" stroke-width="2" stroke-linejoin="round"/><path d="M1327 800.3V807.7M1331 800.3V807.7M1335.1 800.3V807.7" stroke="#000" stroke-width="2" fill="none"/></svg>
<script>(function(){var w=window.innerWidth||0;if(w>100&&Math.abs(w-2880)/2880>0.05){document.body.style.zoom=w/2880;}})();</script>
</body>
</html>
